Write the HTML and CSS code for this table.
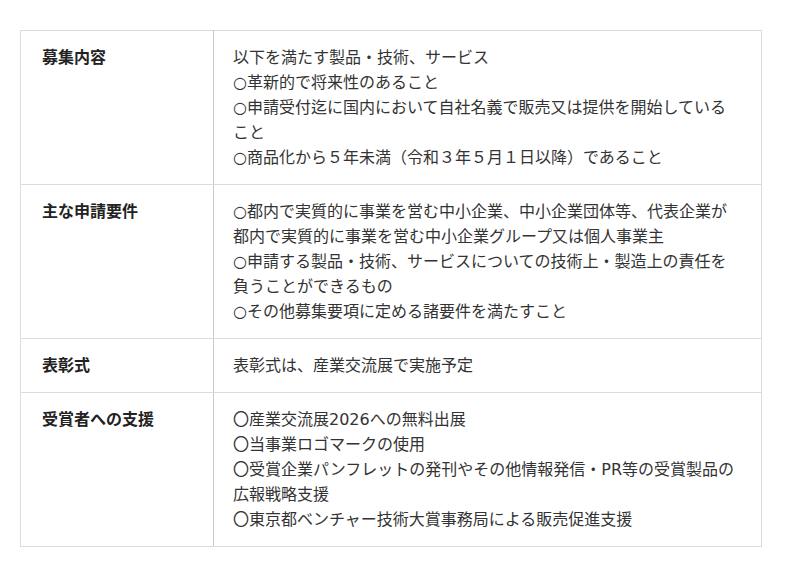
FILE: index.html
```html
<!DOCTYPE html>
<html lang="ja">
<head>
<meta charset="utf-8">
<link rel="stylesheet" href="styles.css">
</head>
<body>
<table class="info">
  <tr>
    <th>募集内容</th>
    <td>以下を満たす製品・技術、サービス<br>○革新的で将来性のあること<br>○申請受付迄に国内において自社名義で販売又は提供を開始していること<br>○商品化から５年未満（令和３年５月１日以降）であること</td>
  </tr>
  <tr>
    <th>主な申請要件</th>
    <td>○都内で実質的に事業を営む中小企業、中小企業団体等、代表企業が都内で実質的に事業を営む中小企業グループ又は個人事業主<br>○申請する製品・技術、サービスについての技術上・製造上の責任を負うことができるもの<br>○その他募集要項に定める諸要件を満たすこと</td>
  </tr>
  <tr>
    <th>表彰式</th>
    <td>表彰式は、産業交流展で実施予定</td>
  </tr>
  <tr>
    <th>受賞者への支援</th>
    <td>〇産業交流展2026への無料出展<br>〇当事業ロゴマークの使用<br>〇受賞企業パンフレットの発刊やその他情報発信・PR等の受賞製品の広報戦略支援<br>〇東京都ベンチャー技術大賞事務局による販売促進支援</td>
  </tr>
</table>
</body>
</html>
```
FILE: styles.css
```css
html, body {
  margin: 0;
  padding: 0;
  background: #fff;
}
body {
  padding: 30px 20px;
  font-family: "DejaVu Sans", "Noto Sans CJK JP", sans-serif;
  font-size: 16px;
  line-height: 25px;
  color: #333;
}
.info {
  width: 742px;
  border-collapse: collapse;
  table-layout: fixed;
}
.info th, .info td {
  border: 1px solid #dcdcdc;
  padding: 14px 25px 14px 19px;
  vertical-align: top;
  text-align: left;
}
.info th {
  width: 147px;
  padding-left: 21px;
  padding-right: 24px;
  font-weight: bold;
  color: #222;
  border-right-color: #c8c8c8;
}
```
